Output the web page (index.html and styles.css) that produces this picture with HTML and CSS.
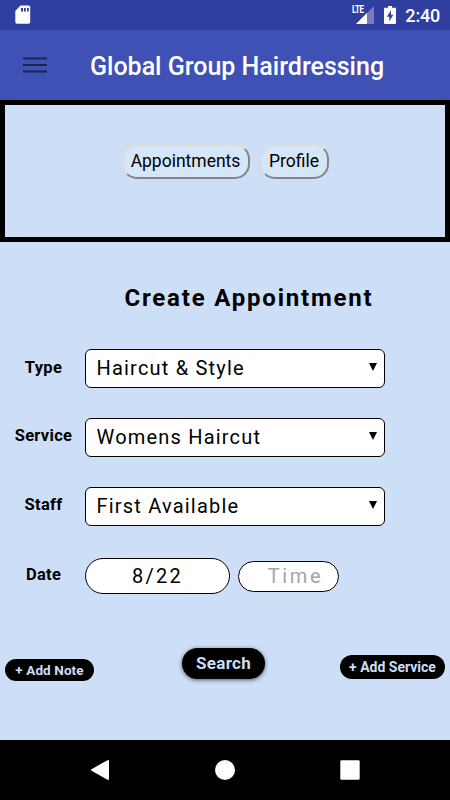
FILE: index.html
```
<!DOCTYPE html>
<html lang="en">
<head>
    <meta charset="UTF-8">
    <meta name="viewport" content="width=device-width, initial-scale=1.0">
    <title>Global Group Hairdressing</title>
    <link rel="stylesheet" href="styles.css">
</head>
<body>
    <div class="status-bar">
        <svg class="sd-card" width="16" height="20" viewBox="0 0 16 20">
            <path d="M5.5 0.5H13.5Q15.2 0.5 15.2 2.2V17Q15.2 18.7 13.5 18.7H2Q0.3 18.7 0.3 17V6Z" fill="#fff"/>
            <path d="M6 3h2v3.5H6zM9 3h1.8v3.5H9zM12 3h1.8v3.5H12z" fill="#303f9f"/>
        </svg>
        <div class="signal">
            <span class="lte">LTE</span>
            <svg width="18" height="18" viewBox="0 0 18 18">
                <path d="M18 0V18H0Z" fill="#737dbf"/>
                <path d="M11 7V18H0Z" fill="#fff"/>
            </svg>
        </div>
        <svg class="battery" width="12" height="18" viewBox="0 0 12 18">
            <path d="M4 0H8V1.7H11Q12 1.7 12 2.7V17Q12 18 11 18H1Q0 18 0 17V2.7Q0 1.7 1 1.7H4Z" fill="#fff"/>
            <path d="M7 4.2L2.8 10.8H5.3V15.5L9.3 8.8H7Z" fill="#303f9f"/>
        </svg>
        <span class="clock">2:40</span>
    </div>

    <header>
        <svg class="menu" width="24" height="17" viewBox="0 0 24 17">
            <path d="M0 1.5H24M0 8H24M0 14.5H24" stroke="#1e2450" stroke-width="2.2"/>
        </svg>
        <h1>Global Group Hairdressing</h1>
    </header>

    <nav class="tabs">
        <button class="tab tab-appointments">Appointments</button>
        <button class="tab tab-profile">Profile</button>
    </nav>

    <main>
        <h2>Create Appointment</h2>

        <form class="booking">
            <label for="type">Type</label>
            <div class="select">
                <select id="type"><option>Haircut &amp; Style</option></select>
                <svg class="arrow" width="8" height="8" viewBox="0 0 8 8"><path d="M0 0H8L4 8Z"/></svg>
            </div>

            <label for="service">Service</label>
            <div class="select">
                <select id="service"><option>Womens Haircut</option></select>
                <svg class="arrow" width="8" height="8" viewBox="0 0 8 8"><path d="M0 0H8L4 8Z"/></svg>
            </div>

            <label for="staff">Staff</label>
            <div class="select">
                <select id="staff"><option>First Available</option></select>
                <svg class="arrow" width="8" height="8" viewBox="0 0 8 8"><path d="M0 0H8L4 8Z"/></svg>
            </div>

            <label for="date" class="date-label">Date</label>
            <div class="when">
                <input type="text" id="date" value="8/22">
                <input type="text" id="time" placeholder="Time">
            </div>
        </form>

        <div class="actions">
            <button class="action add-note">+ Add Note</button>
            <button class="action search">Search</button>
            <button class="action add-service">+ Add Service</button>
        </div>
    </main>

    <footer>
        <svg width="18" height="20" viewBox="0 0 18 20"><path d="M17 1V19L1 10Z" fill="#fff" stroke="#fff" stroke-width="2" stroke-linejoin="round"/></svg>
        <svg width="20" height="20" viewBox="0 0 20 20"><circle cx="10" cy="10" r="10" fill="#fff"/></svg>
        <svg width="20" height="20" viewBox="0 0 20 20"><rect x="0.3" y="0.3" width="19.4" height="19.4" rx="1.2" fill="#fff"/></svg>
    </footer>
</body>
</html>
```
FILE: styles.css
```
:root {
    --primary-color: #3f51b5;
    --primary-dark: #303f9f;
    --background-color: #cddef7;
}

* {
    box-sizing: border-box;
    margin: 0;
    padding: 0;
}

body {
    display: flex;
    flex-direction: column;
    height: 800px;
    overflow: hidden;
    font-family: Roboto, sans-serif;
    background-color: var(--background-color);
    color: #000;
}

button, input, select {
    font-family: inherit;
    color: inherit;
}

.status-bar {
    display: flex;
    align-items: center;
    height: 30px;
    padding: 0 10px 0 15px;
    background-color: var(--primary-dark);
    color: #fff;
}

.signal {
    display: flex;
    align-items: flex-start;
    height: 18px;
    margin-left: auto;
}

.signal svg {
    margin-left: -8px;
}

.lte {
    font-size: 10px;
    font-weight: 700;
    line-height: 8px;
    letter-spacing: -0.5px;
    transform: scaleX(0.8);
    transform-origin: right;
    margin-right: 1px;
}

.battery {
    margin: 0 9px 0 10px;
}

.clock {
    font-size: 18px;
    font-weight: 500;
    line-height: 30px;
    padding-top: 1px;
    letter-spacing: -0.2px;
}

header {
    display: flex;
    align-items: center;
    height: 70px;
    padding-left: 23px;
    background-color: var(--primary-color);
    color: #fff;
}

header h1 {
    margin-left: 43px;
    padding-top: 2px;
    font-size: 25px;
    font-weight: 500;
    white-space: nowrap;
}

.tabs {
    display: flex;
    justify-content: center;
    align-items: flex-start;
    gap: 10px;
    height: 142px;
    padding-top: 39px;
    border: 5px solid #000;
}

.tab {
    height: 35px;
    border: 2.5px solid;
    border-color: #dcdcdc #858585 #858585 #dcdcdc;
    border-radius: 15px;
    background-color: #d6e6f9;
    font-size: 17.5px;
    padding-bottom: 2px;
}

.tab-appointments {
    width: 128px;
}

.tab-profile {
    width: 69px;
}

main {
    flex: 1;
}

h2 {
    margin: 42px 0 0 48px;
    font-size: 24px;
    line-height: 28px;
    letter-spacing: 1.8px;
    text-align: center;
}

.booking {
    display: grid;
    grid-template-columns: 82px 300px;
    column-gap: 3px;
    row-gap: 29.8px;
    align-items: center;
    margin-top: 37px;
}

.booking label {
    padding: 0 0 3px 5px;
    font-size: 16.5px;
    font-weight: 700;
    letter-spacing: 0.3px;
    text-align: center;
}

.booking .date-label {
    padding-bottom: 0;
}

.select {
    position: relative;
    height: 39px;
}

.select select {
    width: 100%;
    height: 100%;
    padding: 0 0 1px 10.5px;
    border: 1.5px solid #000;
    border-radius: 6px;
    background-color: #fff;
    appearance: none;
    font-size: 20px;
    letter-spacing: 1.2px;
}

.arrow {
    position: absolute;
    top: 14px;
    right: 8.5px;
}

.when {
    display: flex;
    align-items: center;
    gap: 8px;
    margin-top: 3px;
}

.when input {
    border: 1.5px solid #000;
    background-color: #fff;
    font-size: 20px;
    text-align: center;
}

#date {
    width: 145px;
    height: 36px;
    padding-bottom: 1px;
    border-radius: 18px;
    letter-spacing: 2.3px;
}

#time {
    width: 101px;
    height: 31px;
    padding-left: 14px;
    border-radius: 16px;
    letter-spacing: 2.6px;
}

#time::placeholder {
    color: #a5a5a5;
}

.actions {
    display: flex;
    align-items: flex-start;
    margin-top: 54px;
    padding: 0 5px;
}

.action {
    border: none;
    border-radius: 16px;
    background-color: #000;
    color: var(--background-color);
    font-weight: 700;
    white-space: nowrap;
}

.add-note {
    width: 89px;
    height: 22px;
    margin-top: 11px;
    font-size: 13.5px;
    letter-spacing: 0.1px;
}

.search {
    width: 83px;
    height: 31px;
    margin: 0 auto 0 88px;
    padding-bottom: 1px;
    font-size: 17px;
    letter-spacing: 0.3px;
    box-shadow: 0 1px 4px rgba(0,0,0,0.6);
}

.add-service {
    width: 105px;
    height: 24px;
    margin-top: 7px;
    font-size: 14px;
}

footer {
    display: flex;
    justify-content: space-between;
    align-items: center;
    height: 60px;
    padding: 0 90px 0 91px;
    background-color: #000;
}
```
